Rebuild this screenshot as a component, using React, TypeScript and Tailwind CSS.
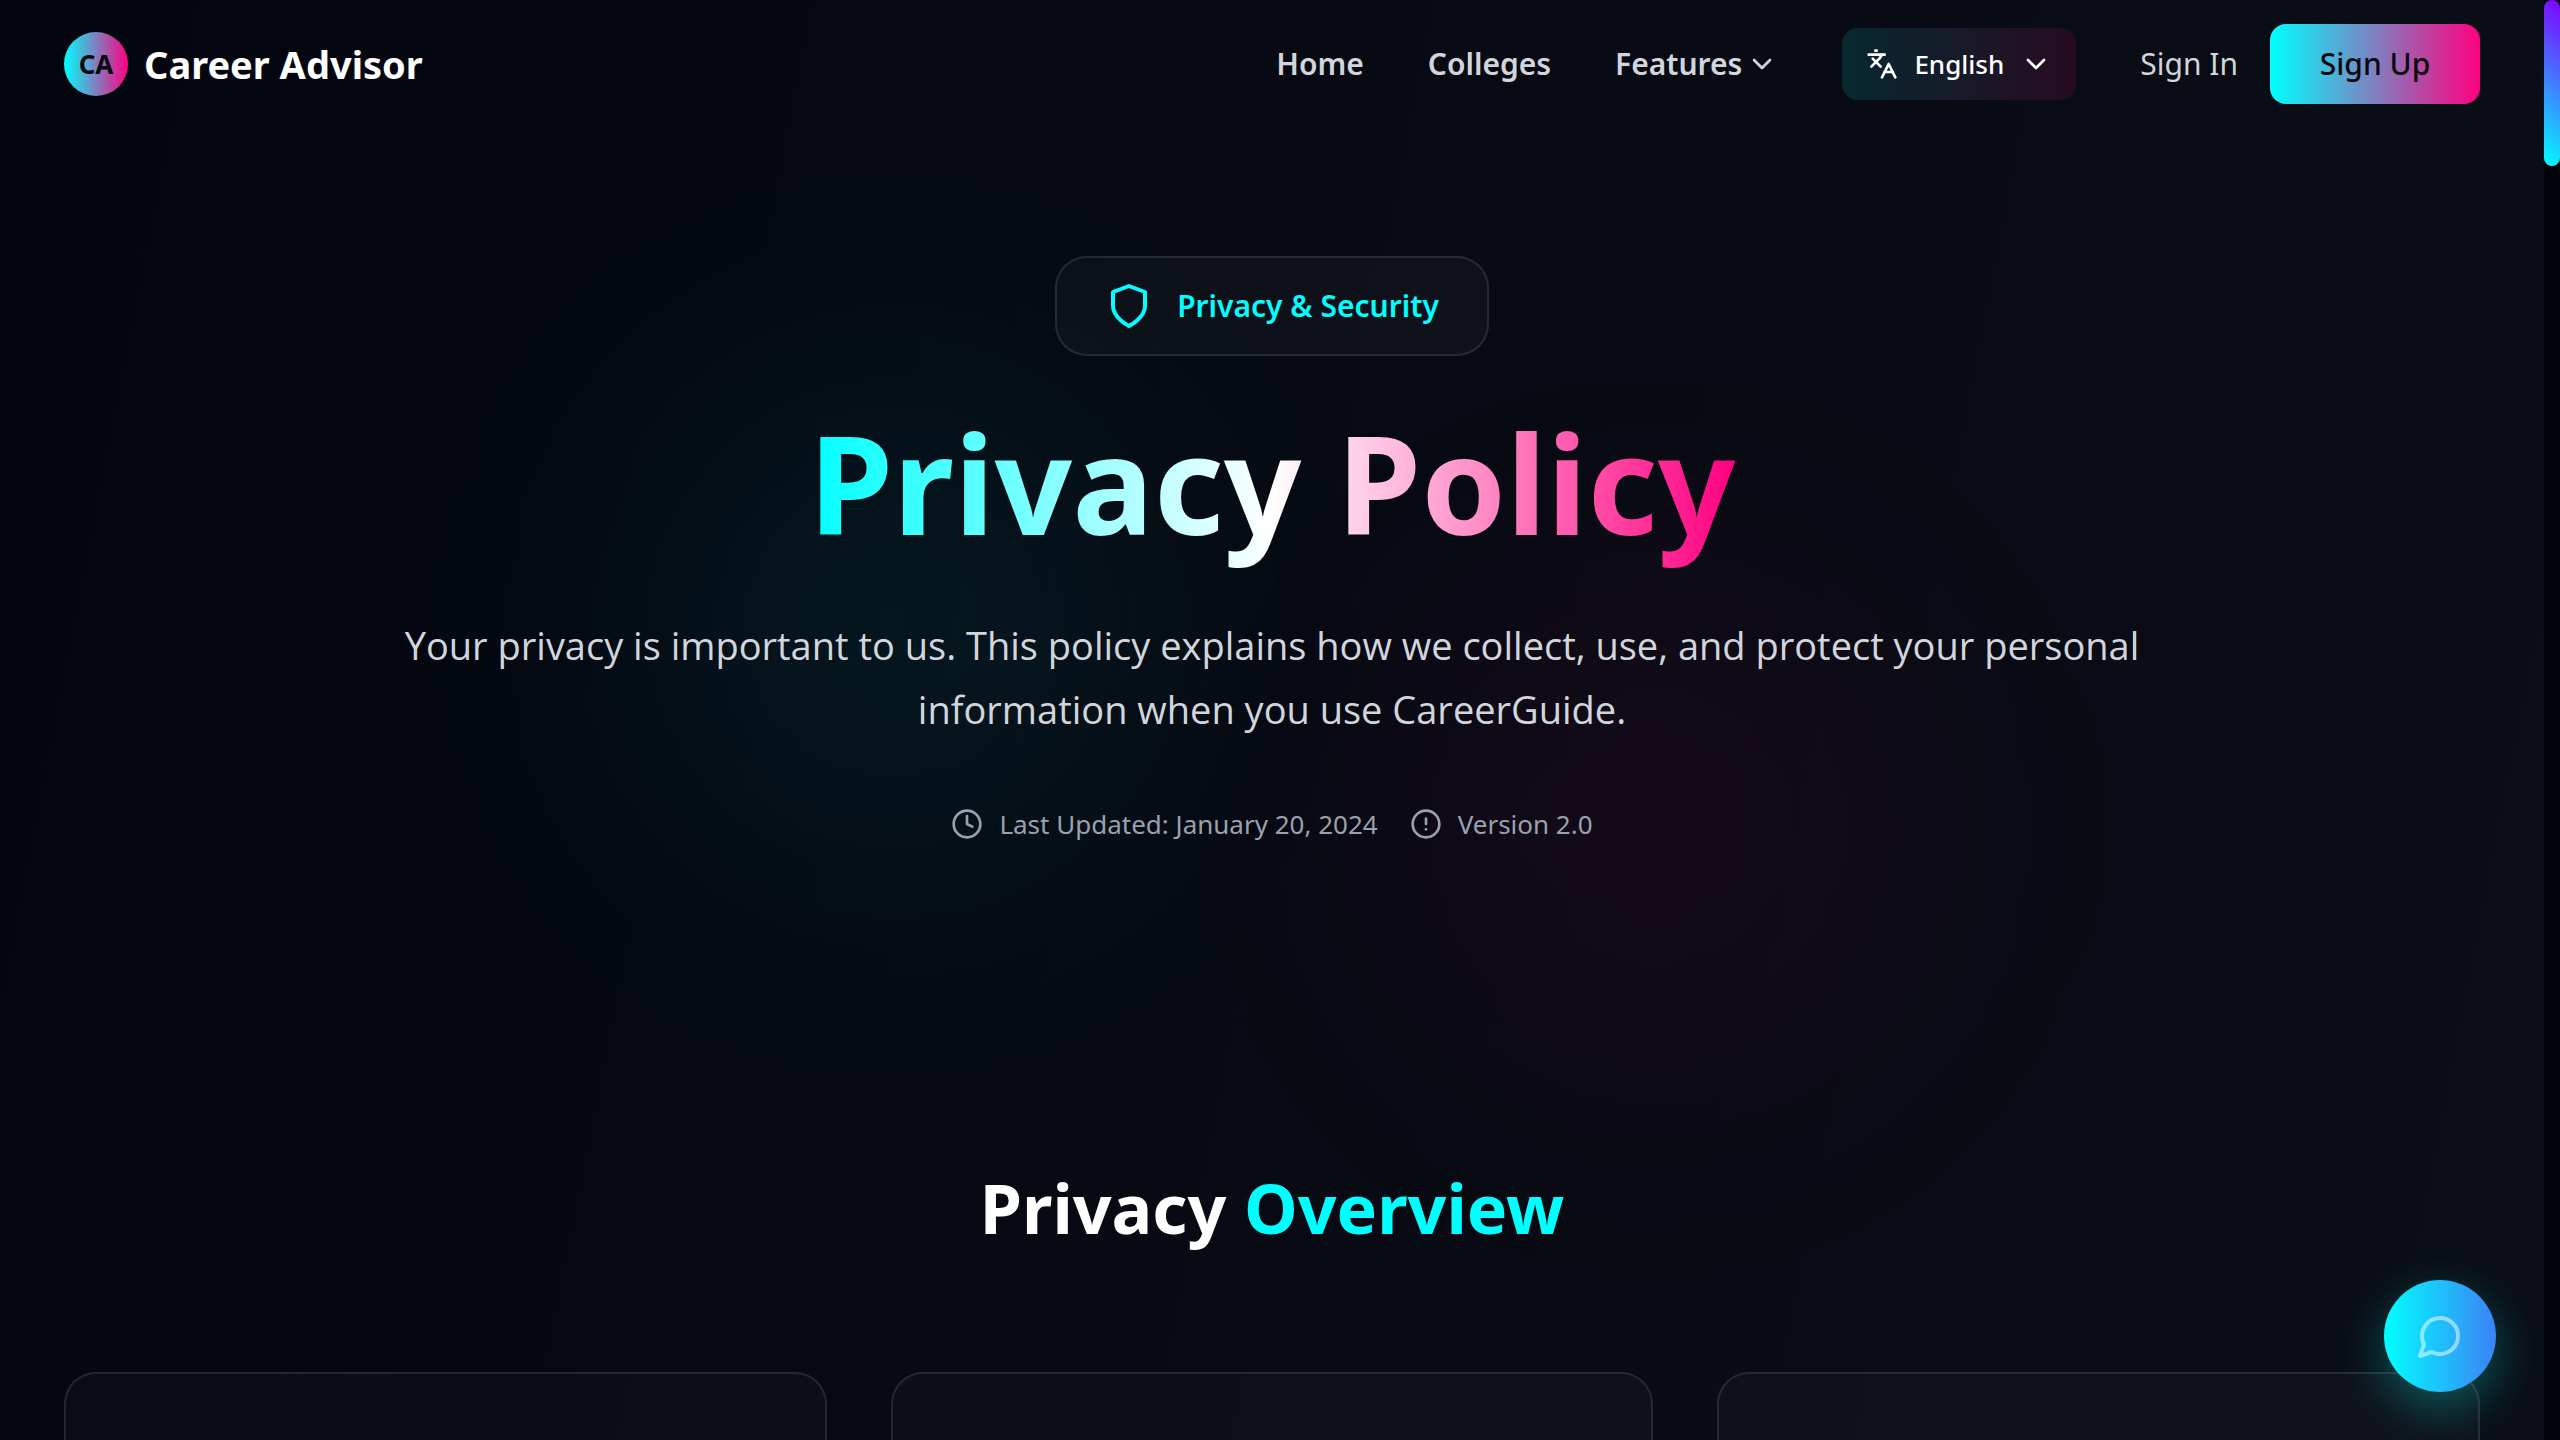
import type { ReactNode } from "react";
import { ChevronDown, CircleAlert, Clock, Languages } from "lucide-react";

function ShieldIcon() {
  return (
    <svg
      className="size-12 shrink-0"
      viewBox="0 0 24 24"
      fill="none"
      stroke="currentColor"
      strokeWidth="2"
      strokeLinecap="round"
      strokeLinejoin="round"
      aria-hidden="true"
    >
      <path d="M12 22s8-4 8-10V5l-8-3-8 3v7c0 6 8 10 8 10z" />
    </svg>
  );
}

function ChatIcon() {
  return (
    <svg
      className="size-12"
      viewBox="0 0 24 24"
      fill="none"
      stroke="currentColor"
      strokeWidth="2"
      strokeLinecap="round"
      strokeLinejoin="round"
      aria-hidden="true"
    >
      <path d="M7.9 20A9 9 0 1 0 4 16.1L2 22Z" />
    </svg>
  );
}

function Header() {
  return (
    <header className="flex h-32 items-center justify-between px-16">
      <a href="#" className="flex items-center gap-4">
        <span className="flex size-16 items-center justify-center rounded-full bg-linear-to-r/srgb from-[#00ffff] to-[#ff0080] text-[26px] font-bold text-[#0a0a0f]">
          CA
        </span>
        <span className="text-[38px] leading-[56px] font-bold text-white">Career Advisor</span>
      </a>
      <div className="flex items-center gap-16">
        <nav className="flex items-center gap-16 text-[30px] leading-12 font-semibold text-gray-300">
          <a href="#">Home</a>
          <a href="#">Colleges</a>
          <button type="button" className="flex items-center gap-1">
            Features
            <ChevronDown className="size-8" />
          </button>
        </nav>
        <button
          type="button"
          className="flex h-[72px] items-center gap-4 rounded-2xl bg-linear-to-r/srgb from-[#00ffff]/12 to-[#ff0080]/12 px-6 text-[26px] font-medium text-white"
        >
          <Languages className="size-8" />
          English
          <ChevronDown className="size-8" />
        </button>
        <div className="flex items-center gap-8 text-[30px] leading-12">
          <a href="#" className="text-gray-300">
            Sign In
          </a>
          <button
            type="button"
            className="h-20 min-w-[210px] rounded-2xl bg-linear-to-r/srgb from-[#00ffff] to-[#ff0080] px-12 font-medium text-[#0a0a0f]"
          >
            Sign Up
          </button>
        </div>
      </div>
    </header>
  );
}

function Meta({ icon, children }: { icon: ReactNode; children: ReactNode }) {
  return (
    <span className="flex items-center gap-4">
      {icon}
      {children}
    </span>
  );
}

function Hero() {
  return (
    <section className="flex flex-col items-center px-16 pt-32 text-center">
      <div className="flex items-center gap-6 rounded-[32px] border-2 border-white/10 bg-white/[0.03] px-12 py-6 text-[30px] leading-12 font-semibold text-[#00ffff]">
        <ShieldIcon />
        <span>Privacy &amp; Security</span>
      </div>
      <h1 className="mt-12 bg-linear-to-r/srgb from-[#00ffff] via-white to-[#ff0080] bg-clip-text pb-4 text-[136px] leading-[158px] font-bold text-transparent">
        Privacy Policy
      </h1>
      <p className="mt-[35px] max-w-[1792px] font-['Open_Sans','Noto_Sans',sans-serif] text-[38px] leading-16 text-gray-300">
        Your privacy is important to us. This policy explains how we collect, use, and protect your
        personal information when you use CareerGuide.
      </p>
      <div className="mt-[63px] flex items-center gap-8 text-[26px] leading-10 text-gray-400">
        <Meta icon={<Clock className="size-8" />}>Last Updated: January 20, 2024</Meta>
        <Meta icon={<CircleAlert className="size-8" />}>Version 2.0</Meta>
      </div>
    </section>
  );
}

function Overview() {
  return (
    <section className="mt-[324px] px-16">
      <h2 className="text-center text-[68px] leading-20 font-bold text-white">
        Privacy <span className="text-[#00ffff]">Overview</span>
      </h2>
      <div className="mt-[124px] grid grid-cols-3 gap-16">
        {["collection", "usage", "protection"].map((id) => (
          <article
            key={id}
            className="h-96 rounded-[32px] border-2 border-white/10 bg-white/[0.025]"
          />
        ))}
      </div>
    </section>
  );
}

export default function App() {
  return (
    <div className="flex h-screen overflow-hidden bg-[#02040c] font-['Noto_Sans','Open_Sans',sans-serif]">
      <main className="relative isolate min-w-0 flex-1 overflow-hidden bg-[linear-gradient(101deg,#03060f,#0b0e16)]">
        <div className="absolute top-[370px] left-1/4 -z-10 size-[512px] rounded-full bg-[#00ffff]/6 blur-[128px]" />
        <div className="absolute top-[570px] right-1/4 -z-10 size-[512px] rounded-full bg-[#ff0080]/5 blur-[128px]" />
        <Header />
        <Hero />
        <Overview />
        <button
          type="button"
          aria-label="Open chat"
          className="absolute right-12 bottom-12 flex size-28 items-center justify-center rounded-full bg-linear-to-r/srgb from-[#00ffff] to-[#3b82f6] text-white/50 shadow-[0_16px_48px_rgba(0,255,255,0.3)]"
        >
          <ChatIcon />
        </button>
      </main>
      <div className="w-4 shrink-0">
        <div className="h-[166px] rounded-full bg-[linear-gradient(45deg,#00ffff,#8000ff)]" />
      </div>
    </div>
  );
}
